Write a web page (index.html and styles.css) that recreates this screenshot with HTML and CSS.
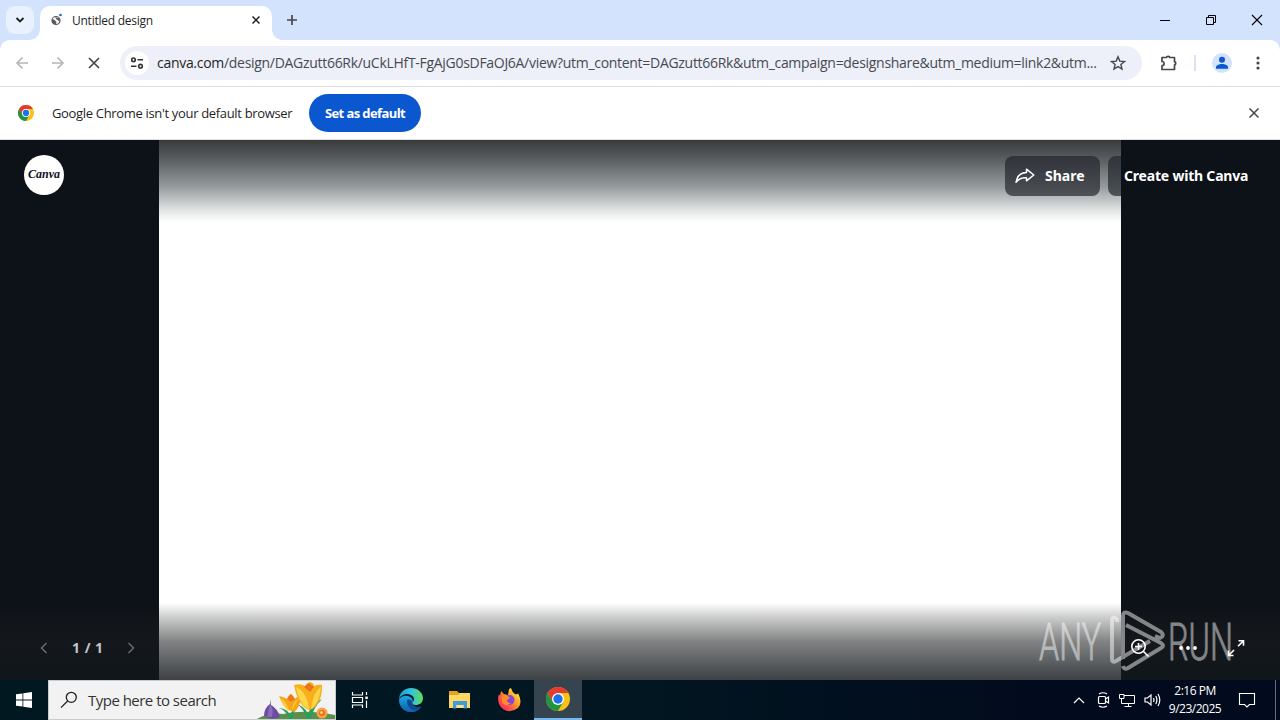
FILE: index.html
```html
<!DOCTYPE html>
<html lang="en">
<head>
  <meta charset="utf-8">
  <title>Untitled design</title>
  <link rel="stylesheet" href="styles.css">
</head>
<body>
  <svg width="0" height="0" class="defs">
    <symbol id="chrome" viewBox="0 0 24 24">
      <circle cx="12" cy="12" r="12" fill="#fbc116"/>
      <path d="M12 12 1.600 6A12 12 0 0 1 22.400 6H12z" fill="#e33b2e"/>
      <path d="M1.600 6 6.800 15 12 12V6z" fill="#e33b2e"/>
      <path d="M1.600 6 6.800 15 12 18l5.200-3L12 24A12 12 0 0 1 1.600 6z" fill="#229342"/>
      <circle cx="12" cy="12" r="6" fill="#fff"/>
      <circle cx="12" cy="12" r="4.700" fill="#1a73e8"/>
    </symbol>
  </svg>

  <div class="tabstrip">
    <div class="tab-search">
      <svg width="10" height="10" viewBox="0 0 10 10"><path d="M1.500 3 5 6.500 8.500 3" fill="none" stroke="#1f1f1f" stroke-width="1.800"/></svg>
    </div>
    <div class="tab">
      <svg class="favicon" width="14" height="14" viewBox="0 0 14 14">
        <circle cx="6" cy="7.500" r="4" fill="#fff" stroke="#55585c" stroke-width="1.200"/>
        <path d="M2 6.500c2 0 3 .3 3.500 1.500S7 8.500 6 11C3.500 11.500 1.600 9 2 6.500zM5 4 9.500 5.500 9.800 8.500C8 8.500 8.500 6.500 6.500 6.500z" fill="#55585c"/>
        <circle cx="10.500" cy="2" r="1.300" fill="#1667d9"/>
      </svg>
      <span class="tab-title">Untitled design</span>
      <svg class="tab-close" width="8" height="8" viewBox="0 0 8 8"><path d="M.5.500l7 7m0-7-7 7" stroke="#1f1f1f" stroke-width="1.500"/></svg>
    </div>
    <svg class="new-tab" width="12" height="12" viewBox="0 0 12 12"><path d="M6 1v10M1 6h10" stroke="#474747" stroke-width="1.700"/></svg>
    <div class="window-buttons">
      <svg width="12" height="12" viewBox="0 0 12 12"><path d="M1 6.500h10" stroke="#000"/></svg>
      <svg width="12" height="12" viewBox="0 0 12 12"><path d="M1.500 3.500h7v7h-7zM3.500 3.500v-2h7v7h-2" fill="none" stroke="#000"/></svg>
      <svg width="12" height="12" viewBox="0 0 12 12"><path d="m1 1 10 10M11 1 1 11" stroke="#000" stroke-width="1.100"/></svg>
    </div>
  </div>

  <div class="toolbar">
    <svg class="nav" width="14" height="14" viewBox="0 0 14 14"><path d="M13 7H2m5.500-5.500L2 7l5.500 5.500" fill="none" stroke="#b3b5b8" stroke-width="1.600"/></svg>
    <svg class="nav" width="14" height="14" viewBox="0 0 14 14"><path d="M1 7h11M6.500 1.500 12 7l-5.500 5.500" fill="none" stroke="#b3b5b8" stroke-width="1.600"/></svg>
    <svg class="nav" width="14" height="14" viewBox="0 0 14 14"><path d="m2 2 10 10M12 2 2 12" stroke="#474747" stroke-width="1.700"/></svg>
    <div class="omnibox">
      <div class="site-info">
        <svg width="14" height="12" viewBox="0 0 14 12" fill="none" stroke="#303236" stroke-width="1.600"><circle cx="3.500" cy="2.800" r="1.800"/><path d="M7.500 2.800H13M1 9.200h5.500"/><circle cx="10.500" cy="9.200" r="1.800"/></svg>
      </div>
      <div class="url"><b>canva.com</b>/design/DAGzutt66Rk/uCkLHfT-FgAjG0sDFaOJ6A/view?utm_content=DAGzutt66Rk&amp;utm_campaign=designshare&amp;utm_medium=link2&amp;utm...</div>
      <svg class="star" width="16" height="16" viewBox="0 0 16 16"><path d="m8 1.700 1.800 4.400 4.700.4-3.600 3 1.100 4.600L8 11.600l-4 2.500 1.100-4.600-3.600-3 4.700-.4z" fill="none" stroke="#474747" stroke-width="1.400"/></svg>
    </div>
    <svg class="puzzle" width="18" height="18" viewBox="0 0 18 18"><path d="M2 3.500h4.500a1.600 1.200 0 0 1 3.200 0H14.500v4.200a1.200 1.600 0 0 1 0 3.200v4.600H2v-3.800a2.100 2.100 0 0 0 0-4.200z" fill="none" stroke="#474747" stroke-width="1.700" stroke-linejoin="round"/></svg>
    <span class="divider"></span>
    <svg class="avatar" width="20" height="20" viewBox="0 0 20 20"><circle cx="10" cy="10" r="10" fill="#d3e3fd"/><circle cx="10" cy="6.800" r="3" fill="#0b57d0"/><path d="M4 15.800v-1.500c0-2 3-3.300 6-3.300s6 1.300 6 3.300v1.500z" fill="#0b57d0"/></svg>
    <svg class="menu" width="4" height="16" viewBox="0 0 4 16" fill="#474747"><circle cx="2" cy="3" r="1.600"/><circle cx="2" cy="8" r="1.600"/><circle cx="2" cy="13" r="1.600"/></svg>
  </div>

  <div class="infobar">
    <svg width="16" height="16"><use href="#chrome"/></svg>
    <span class="infobar-text">Google Chrome isn't your default browser</span>
    <button class="default-button">Set as default</button>
    <svg class="infobar-close" width="10" height="10" viewBox="0 0 10 10"><path d="m.5.500 9 9m0-9-9 9" stroke="#474747" stroke-width="1.500"/></svg>
  </div>

  <div class="viewer">
    <div class="slide"></div>
    <div class="shade-top"></div>
    <div class="shade-bottom"></div>
    <div class="viewer-header">
      <div class="canva-logo">Canva</div>
      <div class="share">
        <svg width="20" height="16" viewBox="0 0 20 16"><path d="M11.500 1.200 18.800 7l-7.300 5.800V9.800C7 9.500 3.500 11 1 14.300 1.800 8.500 5.500 4.800 11.500 4.600z" fill="none" stroke="#fff" stroke-width="1.500" stroke-linejoin="round"/></svg>
        <span>Share</span>
      </div>
      <div class="create"><span>Create with Canva</span></div>
    </div>
    <div class="pager">
      <svg width="8" height="12" viewBox="0 0 8 12"><path d="M6.500 1 1.500 6l5 5" fill="none" stroke="#6c7073" stroke-width="1.400"/></svg>
      <span class="pages">1 / 1</span>
      <svg width="8" height="12" viewBox="0 0 8 12"><path d="m1.500 1 5 5-5 5" fill="none" stroke="#6c7073" stroke-width="1.400"/></svg>
    </div>
    <svg class="watermark" width="210" height="72" viewBox="0 0 210 72">
      <text x="3" y="54.500" textLength="62" lengthAdjust="spacingAndGlyphs">ANY</text>
      <text x="132" y="54.500" textLength="65" lengthAdjust="spacingAndGlyphs">RUN</text>
      <g fill="none" stroke="#fff" stroke-width="4" stroke-linejoin="round">
        <path d="M81 17v-3q-5-4-5 2v38q0 4 4 2l34-20"/>
        <path d="M87 54V11q0-5 5-3l33 19q4 4-1 6l-5-2M90 20l35 18q4 3 0 5L92 63q-4 2-5-2"/>
      </g>
    </svg>
    <div class="tools">
      <svg width="20" height="20" viewBox="0 0 20 20" fill="none" stroke="#fff" stroke-width="1.600"><circle cx="8.500" cy="8.500" r="6.700"/><path d="m13.500 13.500 5 5M8.500 5v7M5 8.500h7"/></svg>
      <svg width="20" height="20" viewBox="0 0 20 20" fill="#fff"><circle cx="3" cy="10" r="1.900"/><circle cx="10" cy="10" r="1.900"/><circle cx="17" cy="10" r="1.900"/></svg>
      <svg width="20" height="20" viewBox="0 0 20 20" fill="none" stroke="#fff" stroke-width="1.600"><path d="M12.500 2.800h5v5M17.500 2.800l-5.500 5.500M7.500 17.500h-5v-5M2.500 17.500 8 12"/></svg>
    </div>
  </div>

  <div class="taskbar">
    <div class="start">
      <svg width="16" height="16" viewBox="0 0 16 16" fill="#fff"><path d="M0 2.300 6.500 1.400v6.200H0zM7.300 1.300 16 0v7.600H7.300zM0 8.400h6.500v6.200L0 13.700zM7.300 8.400H16V16l-8.700-1.300z"/></svg>
    </div>
    <div class="search">
      <svg width="18" height="18" viewBox="0 0 18 18" fill="none" stroke="#1f1f1f" stroke-width="1.300"><circle cx="11.300" cy="6.300" r="5"/><path d="M7.600 10 1 16.600"/></svg>
      <span>Type here to search</span>
      <svg class="flowers" width="80" height="38" viewBox="0 0 80 38">
        <path d="M0 39Q14 31 28 33 50 28 80 34v5z" fill="#5d8f4c"/>
        <path d="M34 38q-2-8-10-11 9 1 11 7 2-6 8-8-5 5-5 12zM52 38q-3-12-13-16 11 3 14 11 3-10 14-15-9 9-11 20z" fill="#28a05a"/>
        <path d="m15 18 1 6q7 4 9 12-8 4-16-1 0-8 6-12z" fill="#6c4ca1"/>
        <path d="m15 23-3 13h5q2-8-2-13z" fill="#8b6cb8"/>
        <path d="M24 15q5 1 8 3 1-4 4-5 3 2 4 5 2-3 6-3-1 12-7 16-10-2-15-16z" fill="#f6a51b"/>
        <path d="M26 17q6 4 8 13-6-3-8-13zM44 17q-4 6-7 12 0-7 7-12z" fill="#ffc93a"/>
        <path d="m36 13 4 5-4 3-4-3z" fill="#e97816"/>
        <path d="M39 4q7-2 11 1 1-3 5-4 4 1 4 4 4-2 8-1 0 10-2 14-4 10-11 11-11-4-15-25z" fill="#f9af1c"/>
        <path d="M41 6q11 5 13 22-9-3-13-22zM66 6q-8 5-10 22 8-5 10-22z" fill="#ffd647"/>
        <path d="m54 2 5 4-4 5-6-5z" fill="#e8751a"/>
        <circle cx="67" cy="32" r="5.500" fill="#f6a348"/><circle cx="67" cy="32" r="3" fill="#e76e20"/><circle cx="66.500" cy="31.500" r="1.500" fill="#ffd15e"/>
      </svg>
    </div>
    <div class="tasks">
      <div class="task">
        <svg width="18" height="18" viewBox="0 0 18 18" fill="none" stroke="#fff" stroke-width="1.200"><path d="M1.500 1v3h10V1M1.500 17v-3h10v3M1.500 6.500h10v5h-10zM15.500 1v3M15.500 9.500V17"/><path d="M14.300 6.800h2.500" stroke-width="2.500"/></svg>
      </div>
      <div class="task edge">
        <svg width="24" height="24" viewBox="0 0 24 24">
          <defs>
            <linearGradient id="edgeTop" x1="0" x2="1"><stop offset="0" stop-color="#1b9de2"/><stop offset=".55" stop-color="#35c5d5"/><stop offset="1" stop-color="#63dc57"/></linearGradient>
            <linearGradient id="edgeLeft" x1="0" y1="0" x2="0" y2="1"><stop offset="0" stop-color="#1ca8e6"/><stop offset="1" stop-color="#105ba9"/></linearGradient>
          </defs>
          <path d="M0 12a12 12 0 0 0 22 7c-2 1-8 1-8-5 0-5-5-7-9-6-3 1-5 2-5 4z" fill="url(#edgeLeft)"/>
          <path d="M0 12C0 5 5 0 12 0s12 5 12 10-4 7-7 7-4-2-3-3c3-4-1-8-6-8-4 0-8 3-8 6z" fill="url(#edgeTop)"/>
          <path d="M8 13c0 6 5 10 10 9 2-1 4-3 4-4-3 2-9 1-9-5-3-2-5-2-5 0z" fill="#10498c"/>
        </svg>
      </div>
      <div class="task">
        <svg width="22" height="20" viewBox="0 0 22 20"><path d="M0 1h8l2 2h11v14H0z" fill="#e7a420"/><path d="M0 5h9l2-2h10v15H0z" fill="#ffd765"/><path d="M4 18.500V11h14v7.500h-3.500V15h-7v3.500z" fill="#3f9bdb"/><path d="M7.500 15h7v3h-7z" fill="#ffdf85"/></svg>
      </div>
      <div class="task">
        <svg width="24" height="24" viewBox="0 0 24 24">
          <defs><linearGradient id="fox" x1="1" y1="0" x2="0" y2="1"><stop offset=".1" stop-color="#ffec3d"/><stop offset=".45" stop-color="#ff9328"/><stop offset=".75" stop-color="#ff3f50"/><stop offset="1" stop-color="#e52484"/></linearGradient></defs>
          <path d="M14 0q1 4 4 6 3 1 3-1 5 10 0 15-8 6-15 1-7-6-4-15l1 2 1-5 3 3 4 1 1-6z" fill="url(#fox)"/>
          <circle cx="12.500" cy="12" r="5" fill="#8545d8"/>
          <path d="M5 9q5-3 8 1l-3 2q0 3 4 3-5 4-9 0z" fill="#ff8b2b"/>
        </svg>
      </div>
      <div class="task active">
        <svg width="24" height="24"><use href="#chrome"/></svg>
      </div>
    </div>
    <div class="tray">
      <svg width="12" height="8" viewBox="0 0 12 8"><path d="m1 7 5-5 5 5" fill="none" stroke="#fff" stroke-width="1.200"/></svg>
      <svg width="14" height="18" viewBox="0 0 14 18" fill="none" stroke="#fff" stroke-width="1.200"><rect x="2.500" y="5.500" width="7" height="7" rx="1"/><path d="m9.500 8 3-2v6l-3-2M3 3q4-2.500 8 0M3 15q4 2.500 8 0"/></svg>
      <svg width="16" height="16" viewBox="0 0 16 16" fill="none" stroke="#fff"><path d="M5 3.500h10.500v8H4M9.500 11.500V14M5.500 14.500h7M.5 2.500H5v4H.5zM2.500 6.500v5H5"/></svg>
      <svg width="18" height="16" viewBox="0 0 18 16" fill="none" stroke="#fff" stroke-width="1.200"><path d="M1 6h2.500L7 3v10l-3.500-3H1zM9.500 6q1 2 0 4M11.800 4q2.200 4 0 8M14 2q3.600 6 0 12"/></svg>
      <div class="clock">2:16 PM<br>9/23/2025</div>
      <svg class="notify" width="18" height="18" viewBox="0 0 18 18"><path d="M1.500 2.500h15v11h-5L9 16l-2.500-2.500h-5z" fill="none" stroke="#fff" stroke-width="1.100"/></svg>
      <span class="peek"></span>
    </div>
  </div>
</body>
</html>
```
FILE: styles.css
```css
* {
  box-sizing: border-box;
}

body {
  margin: 0;
  width: 1280px;
  height: 720px;
  overflow: hidden;
  display: flex;
  flex-direction: column;
  background: #d3e3fd;
  font-family: "Open Sans", "Noto Sans", sans-serif;
  color: #1f1f1f;
  white-space: nowrap;
}

svg {
  display: block;
  flex: none;
}

.defs {
  position: absolute;
}

/* tabs */
.tabstrip {
  height: 40px;
  flex: none;
  display: flex;
  align-items: center;
  padding-left: 6px;
}

.tab-search {
  width: 28px;
  height: 28px;
  border-radius: 9px;
  background: #e9f0fe;
  display: flex;
  align-items: center;
  justify-content: center;
}

.tab {
  position: relative;
  align-self: flex-end;
  width: 232px;
  height: 34px;
  margin-left: 6px;
  padding: 0 12px 6px 10px;
  display: flex;
  align-items: center;
  background: #fff;
  border-radius: 10px 10px 0 0;
}

.tab::before,
.tab::after {
  content: "";
  position: absolute;
  bottom: 0;
  width: 10px;
  height: 10px;
}

.tab::before {
  left: -10px;
  background: radial-gradient(circle at 0 0, transparent 9.5px, #fff 10px);
}

.tab::after {
  right: -10px;
  background: radial-gradient(circle at 100% 0, transparent 9.5px, #fff 10px);
}

.tab-title {
  margin-left: 8px;
  font-size: 12px;
  letter-spacing: -0.25px;
}

.tab-close {
  margin-left: auto;
}

.new-tab {
  margin-left: 14px;
}

.window-buttons {
  display: flex;
  gap: 34px;
  margin-left: auto;
  padding-right: 17px;
}

/* address bar */
.toolbar {
  height: 47px;
  flex: none;
  display: flex;
  align-items: center;
  padding-left: 15px;
  background: #fff;
  border-bottom: 1px solid #dfe1e5;
  border-radius: 10px 10px 0 0;
}

.nav {
  margin-right: 22px;
}

.omnibox {
  width: 1022px;
  height: 34px;
  margin-left: -3px;
  padding-left: 5px;
  display: flex;
  align-items: center;
  background: #edf0f9;
  border-radius: 17px;
}

.site-info {
  width: 24px;
  height: 24px;
  border-radius: 50%;
  background: #fff;
  display: flex;
  align-items: center;
  justify-content: center;
}

.url {
  width: 942px;
  margin-left: 8px;
  padding-bottom: 2px;
  font-size: 14px;
  letter-spacing: -0.296px;
  color: #474a50;
}

.url b {
  font-weight: 400;
  color: #1f1f1f;
}

.star {
  margin-left: 11px;
}

.puzzle {
  margin-left: 18px;
}

.divider {
  width: 2px;
  height: 16px;
  margin: 0 16px;
  background: #d9e2f2;
}

.menu {
  margin-left: 24px;
}

.infobar {
  height: 53px;
  flex: none;
  display: flex;
  align-items: center;
  padding: 0 21px 0 18px;
  background: #fff;
  border-bottom: 1px solid #dfe1e5;
}

.infobar-text {
  width: 241px;
  margin: 0 16px 0 18px;
  font-size: 13px;
  letter-spacing: -0.33px;
}

.default-button {
  width: 112px;
  height: 38px;
  padding: 0;
  border: 0;
  border-radius: 19px;
  background: #0b57d0;
  color: #fff;
  font: 700 13px "Open Sans", sans-serif;
  letter-spacing: -0.6px;
}

.infobar-close {
  margin-left: auto;
}

/* design viewer */
.viewer {
  position: relative;
  height: 540px;
  flex: none;
  background: #0d1118;
  color: #fff;
  font-family: "Noto Sans", sans-serif;
}

.slide {
  width: 962px;
  height: 540px;
  margin-left: 159px;
  background: #fff;
}

.shade-top,
.shade-bottom {
  position: absolute;
  left: 0;
  right: 0;
}

.shade-top {
  top: 0;
  height: 82px;
  background: linear-gradient(#393a3a 0, rgba(48, 54, 58, 0.79) 25%, rgba(45, 56, 60, 0.5) 57%, rgba(45, 56, 60, 0.15) 85%, transparent);
  clip-path: inset(0 159px);
}

.shade-bottom {
  bottom: 0;
  height: 77px;
  background: linear-gradient(transparent, rgba(30, 32, 32, 0.22) 18%, rgba(26, 29, 30, 0.55) 50%, rgba(17, 23, 27, 0.82));
}

.viewer-header {
  position: absolute;
  top: 15px;
  left: 24px;
  right: 16px;
  display: flex;
  align-items: center;
  font-weight: 700;
  font-size: 14px;
}

.canva-logo {
  width: 40px;
  height: 40px;
  margin-right: auto;
  border-radius: 50%;
  background: #fff;
  color: #0d1118;
  font: italic 700 12px/38px "Liberation Serif", serif;
  text-align: center;
}

.share,
.create {
  position: relative;
  top: 1px;
  height: 40px;
  display: flex;
  align-items: center;
  border-radius: 8px;
  background: rgba(32, 36, 43, 0.68);
}

.share span,
.create span {
  padding-bottom: 2px;
}

.share {
  width: 95px;
  padding-left: 10px;
  gap: 10px;
  margin-right: 8px;
}

.create {
  width: 156px;
  padding-left: 16px;
  background: linear-gradient(90deg, rgba(32, 36, 43, 0.68) 13px, rgba(13, 17, 24, 0.7) 13px);
}

.create span {
  letter-spacing: -0.2px;
}

.pager {
  position: absolute;
  left: 40px;
  bottom: 22px;
  display: flex;
  align-items: center;
  gap: 24px;
  line-height: 20px;
}

.pages {
  width: 31px;
  font-size: 14px;
  font-weight: 700;
  letter-spacing: 0.5px;
  color: #c5c7c8;
}

.watermark {
  position: absolute;
  left: 1036px;
  bottom: 3px;
  opacity: 0.48;
}

.watermark text {
  fill: #fff;
  stroke: #fff;
  stroke-width: 0.8px;
  font: 300 51px Roboto, sans-serif;
}

.tools {
  position: absolute;
  right: 34px;
  bottom: 22px;
  display: flex;
  gap: 28px;
}

/* taskbar */
.taskbar {
  height: 40px;
  flex: none;
  display: flex;
  background: linear-gradient(90deg, #011821, #011621 50%, #020b1d 80%, #010b1d);
  color: #fff;
}

.tasks {
  display: flex;
  gap: 1px;
}

.start,
.task {
  width: 48px;
  display: flex;
  align-items: center;
  justify-content: center;
}

.search {
  width: 288px;
  padding-left: 11px;
  display: flex;
  align-items: center;
  background: #f2f2f2;
  border: 1px solid #c9cccd;
  color: #333;
  font-size: 15px;
  letter-spacing: -0.52px;
}

.search span {
  width: 129px;
  margin-left: 10px;
}

.flowers {
  margin-left: auto;
}

.edge {
  margin-left: 2px;
}

.active {
  background: #35444e;
  border-bottom: 2px solid #76b9ed;
}

.tray {
  margin-left: auto;
  display: flex;
  align-items: center;
  gap: 9px;
}

.tray svg:first-child {
  margin-right: 2px;
}

.clock {
  width: 56px;
  margin-left: -4px;
  font-size: 12px;
  line-height: 18px;
  letter-spacing: -0.5px;
  text-align: center;
}

.notify {
  margin-left: 6px;
}

.peek {
  width: 5px;
  height: 40px;
  margin-left: 10px;
  border-left: 1px solid #65707a;
}
```
